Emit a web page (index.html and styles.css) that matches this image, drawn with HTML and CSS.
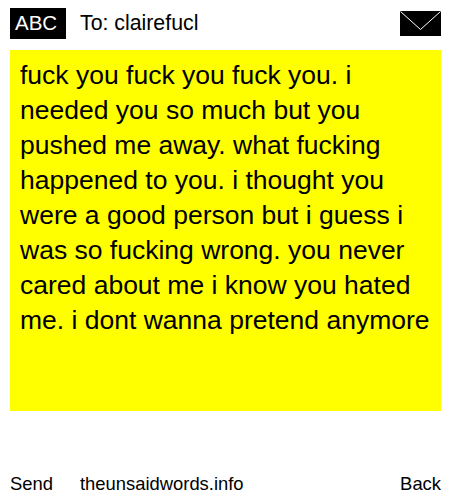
FILE: index.html
```html
<!DOCTYPE html>
<html lang="en">

<head>
    <meta charset="UTF-8">
    <title>To: clairefucl</title>
    <link rel="stylesheet" href="styles.css">
</head>

<body>
    <div class="top">
        <div class="abc">ABC</div>
        <div class="to">To: clairefucl</div>
        <svg class="mail" width="41" height="25" viewBox="0 0 41 25">
            <rect width="41" height="25" fill="#000"></rect>
            <path d="M0.5 0.5 L20.5 18.5 L40.5 0.5" fill="none" stroke="#fff" stroke-width="1"></path>
        </svg>
    </div>
    <div class="message">fuck you fuck you fuck you. i needed you so much but you pushed me away. what fucking happened to you. i thought you were a good person but i guess i was so fucking wrong. you never cared about me i know you hated me. i dont wanna pretend anymore</div>
    <div class="bottom">
        <div class="send">Send</div>
        <div class="site">theunsaidwords.info</div>
        <div class="back">Back</div>
    </div>
</body>

</html>
```

FILE: styles.css
```css
body {
    margin: 0;
    width: 450px;
    height: 500px;
    overflow: hidden;
    background: #fff;
    color: #000;
    font-family: "Liberation Sans", Arial, sans-serif;
    display: flex;
    flex-direction: column;
}

.top {
    display: flex;
    align-items: center;
    height: 31px;
    margin: 8px 9px 11px 10px;
}

.abc {
    width: 56px;
    height: 31px;
    line-height: 30px;
    padding-left: 5px;
    box-sizing: border-box;
    background: #000;
    color: #fff;
    font-size: 20.5px;
}

.to {
    flex: 1;
    margin-left: 14px;
    font-size: 21.3px;
}

.mail {
    display: block;
}

.message {
    width: 411px;
    margin-left: 10px;
    padding: 8px 10px 0 10px;
    height: 353px;
    background: #ff0;
    font-size: 26.5px;
    line-height: 35px;
}

.bottom {
    display: flex;
    margin: 62px 9px 0 10px;
    font-size: 18.4px;
    line-height: 21px;
}

.send {
    width: 70px;
}

.site {
    flex: 1;
}
```
